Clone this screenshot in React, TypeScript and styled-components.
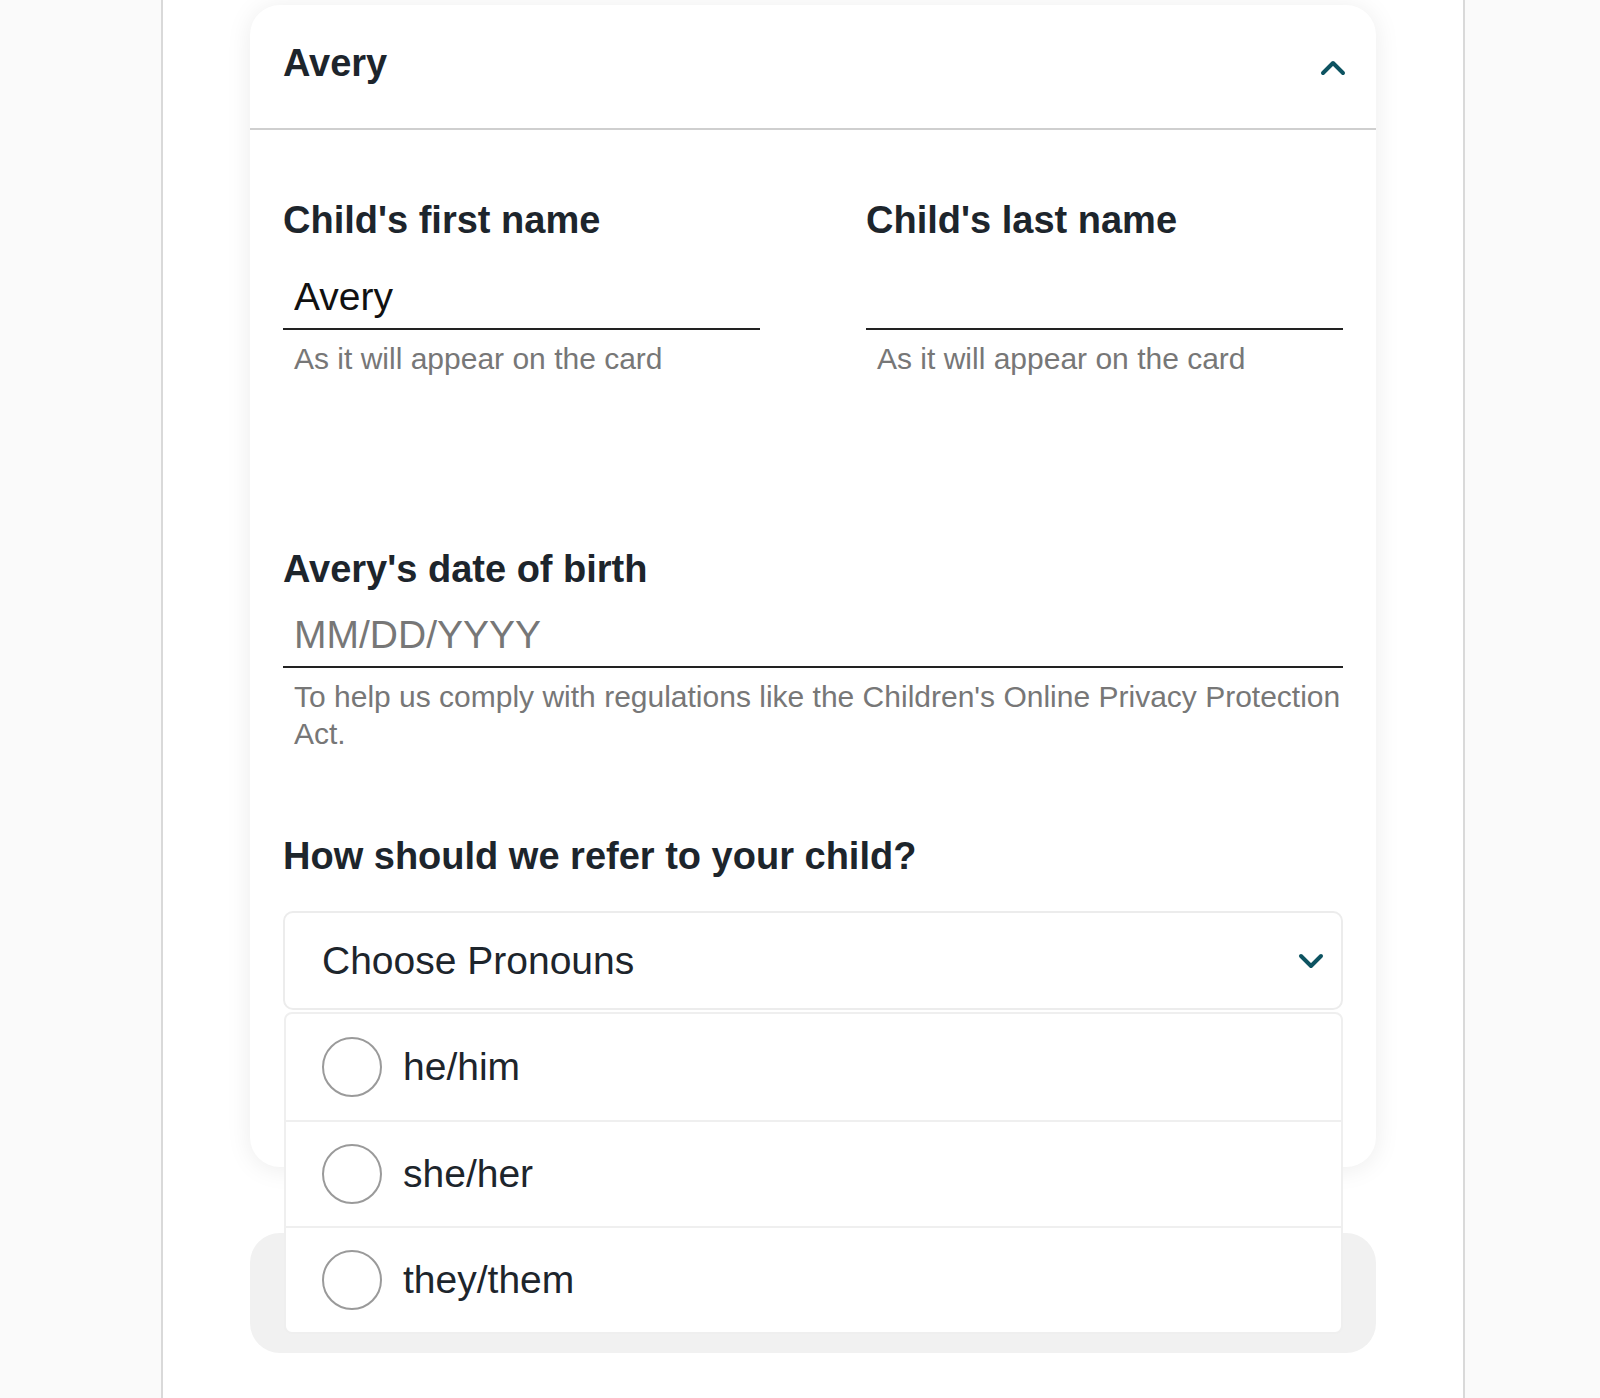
import React, { useState } from "react";
import styled, { createGlobalStyle } from "styled-components";

const GlobalStyle = createGlobalStyle`
  html, body {
    margin: 0;
    padding: 0;
    background: #fafafa;
    font-family: "Liberation Sans", Arial, sans-serif;
  }
  * {
    box-sizing: border-box;
  }
`;

const Page = styled.div`
  width: 1600px;
  min-height: 1398px;
  display: flex;
`;

const Panel = styled.div`
  margin-left: 161px;
  width: 1304px;
  min-height: 1398px;
  background: #ffffff;
  border-left: 2px solid #d9d9d9;
  border-right: 2px solid #d9d9d9;
  padding: 5px 86px 0 87px;
  display: flex;
  flex-direction: column;
`;

const Card = styled.section`
  width: 1126px;
  background: #ffffff;
  border-radius: 30px;
  box-shadow: 0 2px 26px rgba(0, 0, 0, 0.08);
`;

const CardHeader = styled.header`
  height: 125px;
  display: flex;
  align-items: center;
  justify-content: space-between;
  padding: 0 30px 0 33px;
  border-bottom: 2px solid #cfcfcf;
`;

const CardTitle = styled.h2`
  margin: 0 0 8px;
  font-size: 38px;
  line-height: 46px;
  font-weight: 700;
  color: #1d252c;
`;

const ToggleButton = styled.button`
  display: flex;
  align-items: center;
  justify-content: center;
  background: none;
  border: none;
  padding: 0;
  cursor: pointer;
`;

const CardBody = styled.div`
  padding: 67px 33px 157px 33px;
  display: flex;
  flex-direction: column;
`;

const NameRow = styled.div`
  display: grid;
  grid-template-columns: 477px 477px;
  justify-content: space-between;
`;

const Field = styled.div<{ $gap?: number; $spaceAbove?: number }>`
  display: flex;
  flex-direction: column;
  margin-top: ${({ $spaceAbove }) => $spaceAbove ?? 0}px;

  & > label {
    margin-bottom: ${({ $gap }) => $gap ?? 30}px;
  }
`;

const Label = styled.label`
  font-size: 38px;
  line-height: 46px;
  font-weight: 700;
  color: #1d252c;
`;

const TextInput = styled.input`
  width: 100%;
  height: 57px;
  padding: 0 11px 7px;
  border: none;
  border-bottom: 2px solid #222222;
  background: transparent;
  font-family: "Liberation Sans", Arial, sans-serif;
  font-size: 39px;
  color: #111111;
  outline: none;

  &::placeholder {
    color: #777777;
  }
`;

const Helper = styled.p`
  margin: 10px -8px 0 0;
  padding-left: 11px;
  font-size: 30px;
  line-height: 37px;
  color: #777777;
`;

const Question = styled.h3`
  margin: 81px 0 32px;
  font-size: 38px;
  line-height: 46px;
  font-weight: 700;
  color: #1d252c;
`;

const Select = styled.div`
  position: relative;
`;

const SelectButton = styled.button`
  width: 100%;
  height: 99px;
  display: flex;
  align-items: center;
  justify-content: space-between;
  padding: 0 17px 0 37px;
  background: #ffffff;
  border: 2px solid #ececec;
  border-radius: 10px;
  font-family: "Liberation Sans", Arial, sans-serif;
  font-size: 39px;
  color: #1d252c;
  cursor: pointer;
`;

const OptionList = styled.ul`
  position: absolute;
  top: calc(100% + 2px);
  left: 1px;
  right: 0;
  margin: 0;
  padding: 0;
  list-style: none;
  background: #ffffff;
  border: 2px solid #efefef;
  border-radius: 8px;
  z-index: 5;
`;

const Option = styled.li`
  height: 106px;
  display: flex;
  align-items: center;
  gap: 21px;
  padding-left: 36px;
  font-size: 39px;
  color: #1d252c;
  cursor: pointer;

  & + & {
    border-top: 2px solid #efefef;
  }
`;

const Radio = styled.span<{ $checked: boolean }>`
  width: 60px;
  height: 60px;
  border-radius: 50%;
  border: 2px solid #9a9a9a;
  background: ${({ $checked }) => ($checked ? "radial-gradient(circle, #0d5361 0 12px, #fff 13px)" : "#fff")};
  flex-shrink: 0;
`;

const CollapsedCard = styled.div`
  margin-top: 66px;
  width: 1126px;
  height: 120px;
  border-radius: 30px;
  background: #f1f1f1;
`;

const Chevron: React.FC<{ up?: boolean }> = ({ up }) => (
  <svg width="26" height="18" viewBox="0 0 26 18">
    <polyline
      points={up ? "3,15 13,5 23,15" : "3,4 13,14 23,4"}
      fill="none"
      stroke="#0d5361"
      strokeWidth="4"
      strokeLinecap="round"
      strokeLinejoin="round"
    />
  </svg>
);

const pronouns = ["he/him", "she/her", "they/them"];

export default function App() {
  const [open, setOpen] = useState(true);
  const [choice, setChoice] = useState<string | null>(null);

  return (
    <Page>
      <GlobalStyle />
      <Panel>
        <Card>
          <CardHeader>
            <CardTitle>Avery</CardTitle>
            <ToggleButton aria-label="Collapse">
              <Chevron up />
            </ToggleButton>
          </CardHeader>
          <CardBody>
            <NameRow>
              <Field>
                <Label>Child's first name</Label>
                <TextInput defaultValue="Avery" />
                <Helper>As it will appear on the card</Helper>
              </Field>
              <Field>
                <Label>Child's last name</Label>
                <TextInput />
                <Helper>As it will appear on the card</Helper>
              </Field>
            </NameRow>
            <Field $gap={19} $spaceAbove={169}>
              <Label>Avery's date of birth</Label>
              <TextInput placeholder="MM/DD/YYYY" />
              <Helper>
                To help us comply with regulations like the Children's Online Privacy Protection Act.
              </Helper>
            </Field>
            <Question>How should we refer to your child?</Question>
            <Select>
              <SelectButton onClick={() => setOpen((o) => !o)}>
                {choice ?? "Choose Pronouns"}
                <Chevron />
              </SelectButton>
              {open && (
                <OptionList>
                  {pronouns.map((p) => (
                    <Option key={p} onClick={() => setChoice(p)}>
                      <Radio $checked={choice === p} />
                      {p}
                    </Option>
                  ))}
                </OptionList>
              )}
            </Select>
          </CardBody>
        </Card>
        <CollapsedCard />
      </Panel>
    </Page>
  );
}
